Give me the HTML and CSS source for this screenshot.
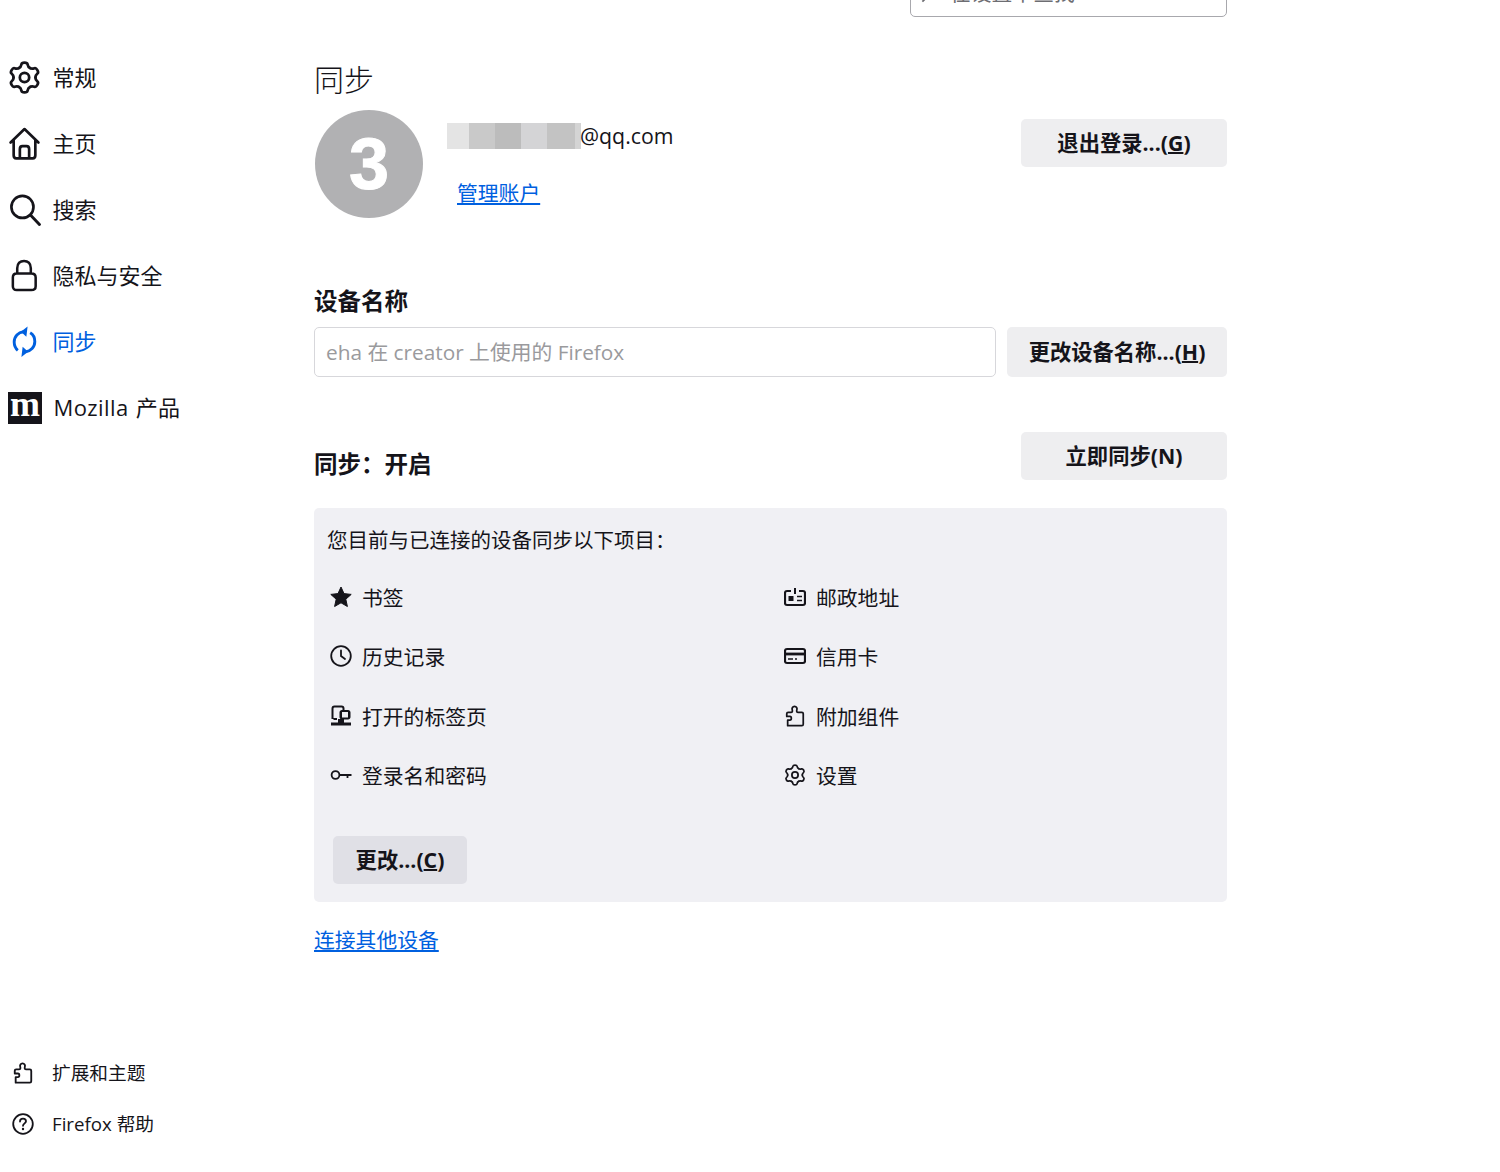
FILE: index.html
```html
<!DOCTYPE html>
<html lang="zh-CN">
<head>
<meta charset="utf-8">
<title>设置</title>
<link rel="stylesheet" href="styles.css">
</head>
<body>
<svg class="defs" aria-hidden="true">
  <symbol id="gear" viewBox="0 0 24 24">
    <g fill="none" stroke="currentColor" stroke-linejoin="round" stroke-linecap="round">
      <path id="tooth" d="M8 5.07C9.2 4.6 9.6 3.5 9.8 2.4Q10 1.2 12 1.2Q14 1.2 14.2 2.4C14.4 3.5 14.8 4.6 16 5.07"/>
      <use href="#tooth" transform="rotate(60 12 12)"/>
      <use href="#tooth" transform="rotate(120 12 12)"/>
      <use href="#tooth" transform="rotate(180 12 12)"/>
      <use href="#tooth" transform="rotate(240 12 12)"/>
      <use href="#tooth" transform="rotate(300 12 12)"/>
      <circle cx="12" cy="12" r="3.4"/>
    </g>
  </symbol>
  <symbol id="puzzle" viewBox="0 0 24 24">
    <path fill="none" stroke="currentColor" stroke-linejoin="round" d="M4 22.5V16.5H6.5C8.5 16.5 8.5 12.5 6.5 12.5H3V9.5C3 8.5 3.6 8 4.5 8H7.5C9 8 9.5 7 9 5.5C8.3 3.5 9.5 1.5 11.5 1.5C13.5 1.5 14.7 3.5 14 5.5C13.5 7 14 8 15.5 8H19.5C20.5 8 21 8.6 21 9.5V21C21 22 20.5 22.5 19.5 22.5Z"/>
  </symbol>
</svg>
<div class="page">
  <nav class="sidebar">
    <ul class="nav-main">
      <li class="nav-item">
        <svg class="nav-icon sw2"><use href="#gear"/></svg>
        <span class="nav-label">常规</span>
      </li>
      <li class="nav-item">
        <svg class="nav-icon" viewBox="0 0 30 32"><path fill="none" stroke="currentColor" stroke-width="2.600" stroke-linejoin="round" stroke-linecap="round" d="M1.500 15L15 2L28.500 15M4.500 12.500V27.500C4.500 29.500 5.500 30.500 7 30.500H23C24.500 30.500 25.500 29.500 25.500 27.500V12.500M10.500 30.500V21.500C10.500 19.500 11.500 18.500 13 18.500H17C18.500 18.500 19.500 19.500 19.500 21.500V30.500"/></svg>
        <span class="nav-label">主页</span>
      </li>
      <li class="nav-item">
        <svg class="nav-icon" viewBox="0 0 30 32"><circle cx="13" cy="13.500" r="10.700" fill="none" stroke="currentColor" stroke-width="2.600"/><path stroke="currentColor" stroke-width="2.800" stroke-linecap="round" d="M21 21.500L29.500 30.500"/></svg>
        <span class="nav-label">搜索</span>
      </li>
      <li class="nav-item">
        <svg class="nav-icon" viewBox="0 0 30 34"><path fill="none" stroke="currentColor" stroke-width="2.600" stroke-linejoin="round" d="M7.500 15V9.500C7.500 4.500 10.500 2 14.500 2C18.500 2 21.500 4.500 21.500 9.500V15M7 15H22C25 15 26.500 16.500 26.500 19V28C26.500 30.800 25 32 22 32H7C4.500 32 3 30.800 3 28V19C3 16.500 4.500 15 7 15Z"/></svg>
        <span class="nav-label">隐私与安全</span>
      </li>
      <li class="nav-item nav-active">
        <svg class="nav-icon" viewBox="0 0 30 32"><g fill="none" stroke="currentColor" stroke-width="2.800"><path d="M8.500 24.500C6 22.500 5 19.500 5 16.500C5 11 9 7 14 6.500"/><path d="M20.500 7.500C24 9.500 25 13 25 16C25 21.500 21 25.500 16 26"/></g><path fill="currentColor" d="M11.500 6.500L18 1.500L16.800 11.500ZM18.500 26L12 31L13.200 21Z"/></svg>
        <span class="nav-label">同步</span>
      </li>
      <li class="nav-item">
        <span class="moz-logo"><span class="moz-m">m</span></span>
        <span class="nav-label moz-label">Mozilla 产品</span>
      </li>
    </ul>
    <ul class="nav-foot">
      <li class="foot-item">
        <svg class="foot-icon sw2"><use href="#puzzle"/></svg>
        <span class="nav-label">扩展和主题</span>
      </li>
      <li class="foot-item">
        <svg class="foot-icon" viewBox="0 0 22 22"><circle cx="11" cy="11" r="9.800" fill="none" stroke="currentColor" stroke-width="1.800"/><path fill="none" stroke="currentColor" stroke-width="1.800" stroke-linecap="round" d="M8 8.500C8 6.500 9.500 5.700 11 5.700C12.800 5.700 14 6.800 14 8.300C14 10.300 11 10.500 11 12.800"/><circle cx="11" cy="16" r="1.200" fill="currentColor"/></svg>
        <span class="nav-label">Firefox 帮助</span>
      </li>
    </ul>
  </nav>

  <main class="content">
    <div class="search-row">
      <div class="search-box">
        <svg class="search-icon" viewBox="0 0 16 16"><circle cx="9" cy="7" r="5.500" fill="none" stroke="currentColor" stroke-width="1.300"/><path stroke="currentColor" stroke-width="1.300" d="M5 11L1 15"/></svg>
        <span>在设置中查找</span>
      </div>
    </div>

    <h1 class="page-title">同步</h1>

    <section class="profile">
      <div class="avatar">3</div>
      <div class="profile-info">
        <div class="email"><span class="redacted"></span><span>@qq.com</span></div>
        <a class="link manage-link" href="#">管理账户</a>
      </div>
      <button class="btn btn-signout">退出登录...(<u>G</u>)</button>
    </section>

    <h2 class="section-title device-title">设备名称</h2>
    <div class="device-row">
      <input class="device-input" type="text" placeholder="eha 在 creator 上使用的 Firefox" disabled>
      <button class="btn btn-rename">更改设备名称...(<u>H</u>)</button>
    </div>

    <div class="sync-head">
      <h2 class="section-title">同步：开启</h2>
      <button class="btn btn-signout">立即同步(N)</button>
    </div>

    <section class="sync-box">
      <p class="sync-intro">您目前与已连接的设备同步以下项目：</p>
      <ul class="sync-grid">
        <li class="sync-item">
          <svg class="item-icon" viewBox="0 0 22 22"><path fill="currentColor" stroke="currentColor" stroke-width="1" stroke-linejoin="round" d="M11 1L14 7.600L21.200 8.400L15.800 13.200L17.400 20.500L11 16.800L4.600 20.500L6.200 13.200L.8 8.400L8 7.600Z"/></svg>
          <span>书签</span>
        </li>
        <li class="sync-item">
          <svg class="item-icon" viewBox="0 0 22 22"><path fill="none" stroke="currentColor" stroke-width="2.200" stroke-linejoin="round" d="M7 5H3C2 5 1 6 1 7V17C1 18 2 19 3 19H19C20 19 21 18 21 17V7C21 6 20 5 19 5H15"/><path fill="none" stroke="currentColor" stroke-width="2" d="M11 2V8"/><rect x="4.500" y="10" width="5" height="5" fill="currentColor"/><path stroke="currentColor" stroke-width="1.600" d="M13 10.500H18M13 14.500H18"/></svg>
          <span>邮政地址</span>
        </li>
        <li class="sync-item">
          <svg class="item-icon" viewBox="0 0 22 22"><circle cx="11" cy="11" r="9.800" fill="none" stroke="currentColor" stroke-width="1.800"/><path fill="none" stroke="currentColor" stroke-width="1.800" stroke-linecap="round" d="M11 5.500V11L15 14"/></svg>
          <span>历史记录</span>
        </li>
        <li class="sync-item">
          <svg class="item-icon" viewBox="0 0 22 22"><rect x="1" y="4" width="20" height="14" rx="2" fill="none" stroke="currentColor" stroke-width="2.200"/><path stroke="currentColor" stroke-width="2.800" d="M1 9H21"/><path stroke="currentColor" stroke-width="1.500" d="M4 14H9M11 14H13"/></svg>
          <span>信用卡</span>
        </li>
        <li class="sync-item">
          <svg class="item-icon" viewBox="0 0 22 22"><path fill="none" stroke="currentColor" stroke-width="2" stroke-linejoin="round" d="M2.500 14V3.500C2.500 2 3 1.500 4.500 1.500H11.500C13 1.500 13.500 2 13.500 3.500V5M7 14H3.500"/><path fill="currentColor" d="M12 5H18C19.500 5 20.500 6 20.500 7.500V12C20.500 13.500 19.500 14.500 18 14.500H12C10.500 14.500 9.500 13.500 9.500 12V7.500C9.500 6 10.500 5 12 5ZM12 7V12.500H18V7Z"/><path fill="currentColor" d="M1 17.500H21V20.500H1ZM8 14H14V17.500H8Z"/></svg>
          <span>打开的标签页</span>
        </li>
        <li class="sync-item">
          <svg class="item-icon sw18"><use href="#puzzle"/></svg>
          <span>附加组件</span>
        </li>
        <li class="sync-item">
          <svg class="item-icon" viewBox="0 0 22 22"><circle cx="5.500" cy="11" r="3.900" fill="none" stroke="currentColor" stroke-width="1.800"/><path fill="none" stroke="currentColor" stroke-width="1.800" d="M9.500 11H21.500M17.500 11V14"/></svg>
          <span>登录名和密码</span>
        </li>
        <li class="sync-item">
          <svg class="item-icon sw18"><use href="#gear"/></svg>
          <span>设置</span>
        </li>
      </ul>
      <button class="btn btn-change">更改...(<u>C</u>)</button>
    </section>

    <a class="link connect-link" href="#">连接其他设备</a>
  </main>
</div>
</body>
</html>
```
FILE: styles.css
```css
* { box-sizing: border-box; }
html, body { margin: 0; padding: 0; height: 100%; overflow: hidden; background: #fff; }
body {
  font-family: "Open Sans", "Noto Sans CJK SC", sans-serif;
  color: #15141a;
  font-size: 20.800px;
}
ul { list-style: none; margin: 0; padding: 0; }
h1, h2, p { margin: 0; }
.defs { position: absolute; width: 0; height: 0; }

.page { display: flex; height: 1172px; }

/* sidebar */
.sidebar {
  width: 314px;
  flex: none;
  padding: 44px 0 23px 8px;
  display: flex;
  flex-direction: column;
  justify-content: space-between;
}
.nav-item {
  height: 66px;
  display: flex;
  align-items: center;
  gap: 11.500px;
  font-size: 22px;
}
.nav-label { margin-bottom: 2px; }
.moz-label { letter-spacing: .4px; word-spacing: 1px; }
.nav-active { color: #0060df; }
.nav-icon { width: 33px; height: 33px; flex: none; color: #15141a; }
.nav-active .nav-icon { color: #0060df; }
.sw2 { stroke-width: 2; }
.sw18 { stroke-width: 1.900; }
.moz-logo {
  width: 34px;
  height: 32px;
  margin-top: 1px;
  flex: none;
  background: #15141a;
  color: #fff;
  display: flex;
  align-items: center;
  justify-content: center;
}
.moz-m {
  font-family: "Liberation Serif", serif;
  font-weight: 700;
  font-size: 36px;
  line-height: 32px;
  margin-top: -8px;
}
.foot-item {
  height: 51px;
  display: flex;
  align-items: center;
  gap: 18px;
  font-size: 18.700px;
  padding-left: 4px;
}
.foot-icon { width: 22px; height: 22px; flex: none; }

/* main */
.content { width: 913px; flex: none; }
.search-row { display: flex; justify-content: flex-end; margin-top: -33px; }
.search-box {
  width: 317px;
  height: 50px;
  border: 1px solid #a8a8ad;
  border-radius: 5px;
  display: flex;
  align-items: center;
  gap: 7px;
  padding-left: 10px;
  font-size: 20.800px;
  color: #6d6d72;
}
.search-icon { width: 22px; height: 22px; flex: none; }

.page-title { font-size: 30px; font-weight: 300; line-height: 40px; margin-top: 43px; }

.profile { display: flex; margin-top: 10px; height: 108px; }
.avatar {
  width: 108px;
  height: 108px;
  margin-left: 1px;
  border-radius: 50%;
  background: #b1b1b3;
  color: #fff;
  font-family: "Liberation Sans", sans-serif;
  font-weight: 700;
  font-size: 72px;
  line-height: 108px;
  text-align: center;
  flex: none;
  -webkit-text-stroke: 1px #fff;
}
.profile-info { margin-left: 24px; flex: 1; min-width: 0; }
.email { display: flex; align-items: center; height: 36px; margin-top: 8px; font-size: 21.300px; }
.redacted {
  width: 134px;
  height: 26px;
  margin-right: -1px;
  background: linear-gradient(90deg, #e4e4e4 0 22px, #c9c9c9 22px 48px, #bcbcbc 48px 74px, #d4d4d6 74px 100px, #c3c3c3 100px 128px, #d4d4d4 128px);
}
.email span:last-child { margin-top: -2px; }
.link { color: #0060df; text-decoration: underline; font-size: 20.800px; }
.manage-link { display: inline-block; margin: 24px 0 0 10px; line-height: 30px; }

.btn {
  font-family: inherit;
  font-size: 21.300px;
  font-weight: 700;
  color: #15141a;
  background: #eeeef0;
  border: 0;
  border-radius: 5px;
  padding: 0 0 3px;
  flex: none;
}
.btn u { text-underline-offset: 1px; text-decoration-thickness: 1.500px; }
.btn-signout { width: 206px; height: 48px; }
.profile .btn-signout { margin-top: 9px; }
.btn-rename { width: 220px; height: 50px; }
.btn-change { width: 134px; height: 48px; background: #e0e0e6; margin: 31px 0 0 6px; display: block; }

.section-title { font-size: 23.500px; font-weight: 700; line-height: 32px; }
.device-title { margin-top: 67px; }
.device-row { display: flex; gap: 11px; margin-top: 10px; }
.device-input {
  flex: 1;
  min-width: 0;
  height: 50px;
  border: 1px solid #d7d7db;
  border-radius: 5px;
  background: #fff;
  padding: 0 11px;
  font: inherit;
  font-size: 20.800px;
}
.device-input::placeholder { color: #9a9a9d; opacity: 1; }

.sync-head { display: flex; justify-content: space-between; align-items: flex-start; margin-top: 55px; }
.sync-head .section-title { margin-top: 16px; }

.sync-box {
  margin-top: 28px;
  height: 394px;
  background: #f0f0f4;
  border-radius: 5px;
  padding: 16px 13px 0;
}
.sync-intro { line-height: 32px; font-size: 20.500px; }
.sync-grid { display: grid; grid-template-columns: 454px 1fr; grid-auto-rows: 59.500px; margin-top: 11px; }
.sync-item { display: flex; align-items: center; gap: 10px; padding-left: 3px; }
.item-icon { width: 22px; height: 22px; flex: none; }

.connect-link { display: inline-block; margin-top: 23px; line-height: 30px; }
```
